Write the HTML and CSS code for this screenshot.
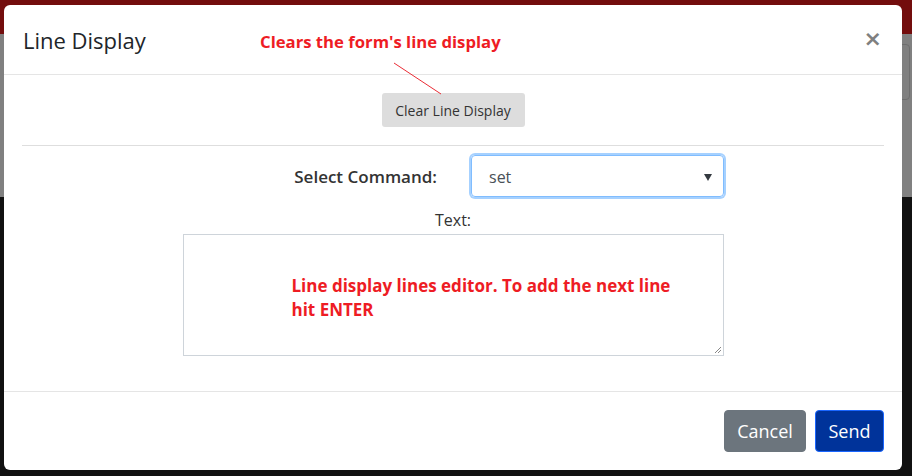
FILE: index.html
```html
<!DOCTYPE html>
<html lang="en">
<head>
<meta charset="utf-8">
<title>Line Display</title>
<link rel="stylesheet" href="styles.css">
</head>
<body>
<div class="backdrop">
  <div class="bg-band"></div>
  <div class="bg-card"></div>
</div>
<div class="modal">
  <div class="modal-header">
    <h5 class="modal-title">Line Display</h5>
    <span class="note note-header">Clears the form's line display</span>
    <svg class="note-line" width="60" height="40" viewBox="0 0 60 40"><line x1="2" y1="2" x2="49" y2="33" stroke="#e8141e" stroke-width="0.9"/></svg>
    <button class="close" type="button" aria-label="Close">&times;</button>
  </div>
  <div class="modal-body">
    <div class="clear-row">
      <button class="btn-clear" type="button">Clear Line Display</button>
    </div>
    <hr class="divider">
    <div class="form">
      <div class="form-row">
        <label class="label">Select Command:</label>
        <div class="select">
          <span>set</span>
          <span class="caret"></span>
        </div>
      </div>
      <div class="text-label">Text:</div>
      <div class="textarea">
        <div class="note note-area">Line display lines editor. To add the next line<br>hit ENTER</div>
        <svg class="grip" width="10" height="10" viewBox="0 0 10 10"><path d="M9 3 L3 9 M9 6 L6 9" stroke="#888" stroke-width="1"/></svg>
      </div>
    </div>
  </div>
  <div class="modal-footer">
    <button class="btn btn-cancel" type="button">Cancel</button>
    <button class="btn btn-send" type="button">Send</button>
  </div>
</div>
</body>
</html>
```

FILE: styles.css
```css
* { box-sizing: border-box; }
html, body { margin: 0; padding: 0; }
body {
  width: 912px;
  height: 476px;
  overflow: hidden;
  position: relative;
  font-family: "Open Sans", "Noto Sans", sans-serif;
  background: #111111;
}
.backdrop {
  height: 197px;
  background: #808080;
  position: relative;
}
.bg-band {
  height: 34px;
  background: #730d0d;
}
.bg-card {
  position: absolute;
  left: 888px;
  top: 44px;
  width: 22px;
  height: 56px;
  border: 1px solid #6e6e6e;
  border-radius: 4px;
}
.modal {
  position: absolute;
  left: 4px;
  top: 5px;
  width: 898px;
  height: 465px;
  background: #fff;
  border-radius: 6px;
  display: flex;
  flex-direction: column;
}
.modal-header {
  position: relative;
  height: 70px;
  border-bottom: 1px solid #e5e5e5;
  display: flex;
  align-items: center;
  justify-content: space-between;
  padding: 0 20px 0 19px;
}
.modal-title {
  margin: 0;
  font-size: 22px;
  font-weight: 400;
  color: #212529;
}
.note {
  color: #ee1c24;
  font-weight: 700;
}
.note-header {
  position: absolute;
  left: 256px;
  top: 25px;
  font-size: 16.7px;
}
.note-line {
  position: absolute;
  left: 388px;
  top: 56px;
}
.close {
  border: 0;
  background: none;
  padding: 0;
  margin-top: -2px;
  font-family: "DejaVu Sans", sans-serif;
  font-size: 22px;
  font-weight: 700;
  color: #808080;
  line-height: 1;
}
.modal-body {
  flex: 1;
  padding: 18px 18px 0 18px;
}
.clear-row {
  display: flex;
  justify-content: center;
}
.btn-clear {
  width: 143px;
  height: 34px;
  border: 0;
  border-radius: 3px;
  background: #dddddd;
  color: #333;
  font-family: inherit;
  font-size: 14px;
  padding: 0;
}
.divider {
  margin: 18px 0 0 0;
  border: 0;
  border-top: 1px solid #dedede;
}
.form {
  width: 541px;
  margin: 9px auto 0 auto;
}
.form-row {
  display: grid;
  grid-template-columns: 1fr 1fr;
  align-items: center;
}
.label {
  text-align: right;
  padding-right: 16px;
  font-size: 17px;
  font-weight: 600;
  color: #333;
}
.select {
  margin-left: 18px;
  height: 42px;
  border: 1px solid #80bdff;
  border-radius: 4px;
  box-shadow: 0 0 0 2px rgba(0, 123, 255, 0.35);
  display: flex;
  align-items: center;
  justify-content: space-between;
  padding: 2px 11px 0 17px;
  font-size: 16px;
  color: #495057;
}
.caret {
  width: 0;
  height: 0;
  border-left: 4px solid transparent;
  border-right: 4px solid transparent;
  border-top: 7px solid #343a40;
}
.text-label {
  text-align: center;
  font-size: 16px;
  color: #333;
  margin-top: 12px;
  margin-bottom: 3px;
  line-height: 22px;
}
.textarea {
  position: relative;
  height: 122px;
  border: 1px solid #ced4da;
  padding: 39px 20px 0 108px;
}
.note-area {
  font-size: 17px;
  line-height: 24px;
}
.grip {
  position: absolute;
  right: 1px;
  bottom: 1px;
}
.modal-footer {
  height: 79px;
  border-top: 1px solid #e5e5e5;
  display: flex;
  align-items: center;
  justify-content: flex-end;
  gap: 9px;
  padding: 0 18px 0 0;
}
.btn {
  height: 42px;
  border-radius: 4px;
  font-family: inherit;
  font-size: 18px;
  color: #fff;
  padding: 0;
}
.btn-cancel {
  width: 82px;
  background: #6c757d;
  border: 1px solid #6c757d;
}
.btn-send {
  width: 69px;
  background: #00339a;
  border: 1px solid #1a66ff;
}
```
